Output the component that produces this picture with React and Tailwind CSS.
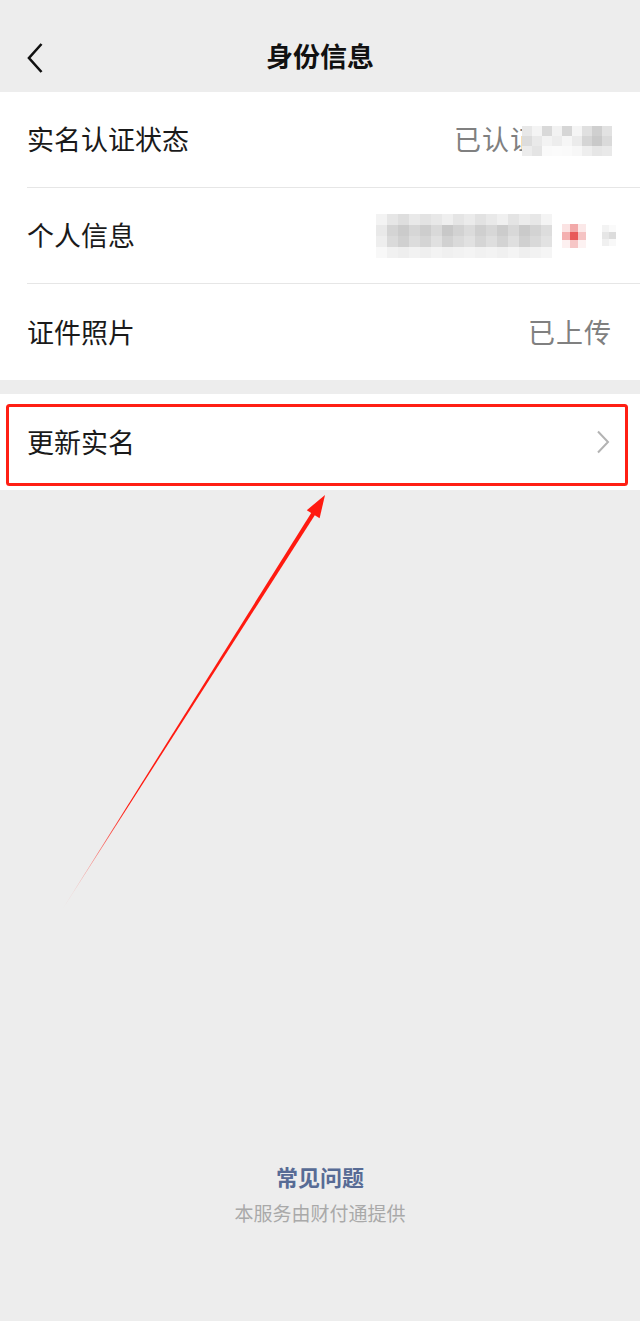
const mosaic1 = [
  ["#e8e8e8", "#f4f4f4", "#d9d9d9", "#f2f2f2", "#d6d6d6", "#f5f5f5", "#e0e0e0", "#cfcfcf", "#e2e2e2"],
  ["#dcdcdc", "#e9e9e9", "#f3f3f3", "#ededed", "#f6f6f6", "#ebebeb", "#d5d5d5", "#c9c9c9", "#dadada"],
  ["#ececec", "#e4e4e4", "#fafafa", "#fbfbfb", "#fafafa", "#f7f7f7", "#eeeeee", "#e6e6e6", "#e9e9e9"],
];

const mosaic2 = [
  ["#f3f3f3", "#e6e6e6", "#dedede", "#e9e9e9", "#e3e3e3", "#e8e8e8", "#efefef", "#e5e5e5", "#ebebeb", "#e2e2e2", "#e9e9e9", "#f0f0f0", "#e4e4e4", "#ececec", "#e7e7e7", "#f4f4f4"],
  ["#e9e9e9", "#d4d4d4", "#cbcbcb", "#d6d6d6", "#cdcdcd", "#d9d9d9", "#c8c8c8", "#d2d2d2", "#dbdbdb", "#cfcfcf", "#d7d7d7", "#cccccc", "#d8d8d8", "#cacaca", "#d3d3d3", "#dddddd"],
  ["#eeeeee", "#dadada", "#d0d0d0", "#dcdcdc", "#d4d4d4", "#e0e0e0", "#d1d1d1", "#dadada", "#e1e1e1", "#d5d5d5", "#dedede", "#d3d3d3", "#dfdfdf", "#d0d0d0", "#d9d9d9", "#e2e2e2"],
  ["#f8f8f8", "#f1f1f1", "#eeeeee", "#f2f2f2", "#efefef", "#f3f3f3", "#f0f0f0", "#f2f2f2", "#f4f4f4", "#f1f1f1", "#f3f3f3", "#f0f0f0", "#f4f4f4", "#efefef", "#f2f2f2", "#f5f5f5"],
];

const Mosaic = ({ rows, cell }) => (
  <div className="flex flex-col">
    {rows.map((r, i) => (
      <div key={i} className="flex">
        {r.map((c, j) => (
          <div key={j} style={{ background: c, width: cell, height: cell }} />
        ))}
      </div>
    ))}
  </div>
);

const Chevron = ({ className }) => (
  <svg viewBox="0 0 14 24" className={className} fill="none">
    <path d="M2 1.5 L12 12 L2 22.5" stroke="currentColor" strokeWidth="2" />
  </svg>
);

const Row = ({ label, children, divider }) => (
  <div className="pl-[27px]">
    <div className={`h-[96px] flex items-center pr-[28px] ${divider ? "border-b border-[#e6e6e6]" : ""}`}>
      <span className="text-[27px] text-[#1a1a1a] flex-1">{label}</span>
      {children}
    </div>
  </div>
);

export default function App() {
  return (
    <div
      className="relative w-[640px] h-[1321px] bg-[#ededed] flex flex-col overflow-hidden"
      style={{ fontFamily: '"Noto Sans CJK SC", "Noto Sans", sans-serif' }}
    >
      <div className="h-[92px] relative flex items-center justify-center">
        <svg viewBox="0 0 18 32" className="absolute left-[26px] top-[42px] w-[18px] h-[32px]" fill="none">
          <path d="M15.5 2 L3 16 L15.5 30" stroke="#111" strokeWidth="2.6" />
        </svg>
        <span className="text-[27px] font-bold text-[#111] mt-[20px]">身份信息</span>
      </div>

      <div className="bg-white">
        <Row label="实名认证状态" divider>
          <div className="flex items-center">
            <span className="text-[27px] text-[#808080] tracking-[1px]">已认证</span>
            <div className="-ml-[16px] mt-[2px]">
              <Mosaic rows={mosaic1} cell={10} />
            </div>
          </div>
        </Row>
        <Row label="个人信息" divider>
          <div className="flex items-center gap-[10px] -mr-[4px]">
            <Mosaic rows={mosaic2} cell={11} />
            <div className="flex flex-col">
              <div className="flex">
                <div className="w-[8px] h-[8px] bg-[#fbe3e3]" />
                <div className="w-[8px] h-[8px] bg-[#f2a9a9]" />
                <div className="w-[8px] h-[8px] bg-[#fbe8e8]" />
              </div>
              <div className="flex">
                <div className="w-[8px] h-[8px] bg-[#f4b0b0]" />
                <div className="w-[8px] h-[8px] bg-[#e85a5a]" />
                <div className="w-[8px] h-[8px] bg-[#f5c3c3]" />
              </div>
              <div className="flex">
                <div className="w-[8px] h-[8px] bg-[#fdf0f0]" />
                <div className="w-[8px] h-[8px] bg-[#f6c6c6]" />
                <div className="w-[8px] h-[8px] bg-[#fdf2f2]" />
              </div>
            </div>
            <div className="flex flex-col ml-[6px]">
              <div className="flex">
                <div className="w-[7px] h-[7px] bg-[#f3f3f3]" />
                <div className="w-[7px] h-[7px] bg-[#fafafa]" />
              </div>
              <div className="flex">
                <div className="w-[7px] h-[7px] bg-[#e6e6e6]" />
                <div className="w-[7px] h-[7px] bg-[#dcdcdc]" />
              </div>
              <div className="flex">
                <div className="w-[7px] h-[7px] bg-[#f0f0f0]" />
                <div className="w-[7px] h-[7px] bg-[#f8f8f8]" />
              </div>
            </div>
          </div>
        </Row>
        <Row label="证件照片">
          <span className="text-[27px] text-[#808080] tracking-[1px]">已上传</span>
        </Row>
      </div>

      <div className="h-[14px]" />

      <div className="bg-white h-[96px] flex items-center pl-[27px] pr-[30px]">
        <span className="text-[27px] text-[#1a1a1a] flex-1">更新实名</span>
        <Chevron className="w-[14px] h-[24px] text-[#b3b3b3]" />
      </div>

      <div className="flex-1" />

      <div className="flex flex-col items-center pb-[94px]">
        <span className="text-[22px] font-bold text-[#576b95]">常见问题</span>
        <span className="text-[19px] text-[#a9a9a9] mt-[6px]">本服务由财付通提供</span>
      </div>

      <svg className="absolute left-0 top-0 w-[640px] h-[1321px] pointer-events-none" viewBox="0 0 640 1321">
        <defs>
          <linearGradient id="tail" x1="62" y1="910" x2="325" y2="495" gradientUnits="userSpaceOnUse">
            <stop offset="0" stopColor="#ff1a10" stopOpacity="0.1" />
            <stop offset="0.25" stopColor="#ff1a10" stopOpacity="1" />
            <stop offset="1" stopColor="#ff1a10" />
          </linearGradient>
        </defs>
        <rect x="7.5" y="405.5" width="619" height="79" rx="2" fill="none" stroke="#ff1f14" strokeWidth="3" />
        <polygon points="62,910 315.1,514.7 311.5,512.5" fill="url(#tail)" />
        <polygon points="325,495 319.6,518.3 306.8,510.2" fill="#ff1a10" />
      </svg>
    </div>
  );
}
